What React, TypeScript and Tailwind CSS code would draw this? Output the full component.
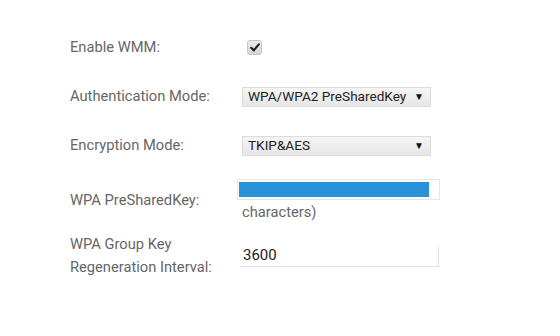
import React from 'react';

const labelCls = 'w-[170px] shrink-0 text-[14.7px] leading-[23px] text-[#666]';

const Select = ({ value }: { value: string }) => (
  <div className="w-[189px] h-[20px] flex items-center pl-[5px] pr-[6px] border border-[#dcdcdc] bg-gradient-to-b from-[#f5f5f5] to-[#e6e6e6] text-[13.6px] text-[#222]">
    <span className="flex-1 leading-none whitespace-nowrap">{value}</span>
    <span className="text-[10px] leading-none text-[#111]">▼</span>
  </div>
);

export default function App() {
  return (
    <div className="w-[560px] h-[336px] bg-white pl-[70px] pt-[22px]" style={{ fontFamily: 'Roboto, "Noto Sans", sans-serif' }}>
      {/* Enable WMM */}
      <div className="flex items-center h-[50px]">
        <div className={labelCls}>Enable WMM:</div>
        <div className="ml-[7px] w-[15px] h-[15px] rounded-[3px] border border-[#c4c4c4] bg-gradient-to-b from-[#ececec] to-[#d4d4d4] flex items-center justify-center">
          <svg width="10" height="9" viewBox="0 0 10 9">
            <path d="M1.2 4.8 L3.8 7.4 L8.8 1.4" fill="none" stroke="#222" strokeWidth="2.2" strokeLinecap="round" strokeLinejoin="round" />
          </svg>
        </div>
      </div>

      {/* Authentication Mode */}
      <div className="flex items-center h-[49px]">
        <div className={labelCls}>Authentication Mode:</div>
        <div className="ml-[2px]">
          <Select value="WPA/WPA2 PreSharedKey" />
        </div>
      </div>

      {/* Encryption Mode */}
      <div className="flex items-center h-[49px]">
        <div className={labelCls}>Encryption Mode:</div>
        <div className="ml-[2px]">
          <Select value="TKIP&AES" />
        </div>
      </div>

      {/* WPA PreSharedKey */}
      <div className="flex items-center h-[60px]">
        <div className={labelCls}>WPA PreSharedKey:</div>
        <div className="flex flex-col gap-[3px] -ml-[3px]">
          <div className="w-[203px] h-[21px] border border-[#e6e6e6] bg-white pl-[1px] pt-[2px] pr-[10px]">
            <div className="h-[15px] bg-[#2891d8]" />
          </div>
          <div className="text-[14.7px] leading-[18px] text-[#666] pl-[5px]">characters)</div>
        </div>
      </div>

      {/* WPA Group Key Regeneration Interval */}
      <div className="flex items-center h-[52px]">
        <div className={labelCls}>
          WPA Group Key
          <br />
          Regeneration Interval:
        </div>
        <div className="w-[199px] h-[21px] border-r border-b border-[#e2e2e2] flex items-center pl-[3px] text-[15px] text-[#222]">
          3600
        </div>
      </div>
    </div>
  );
}
